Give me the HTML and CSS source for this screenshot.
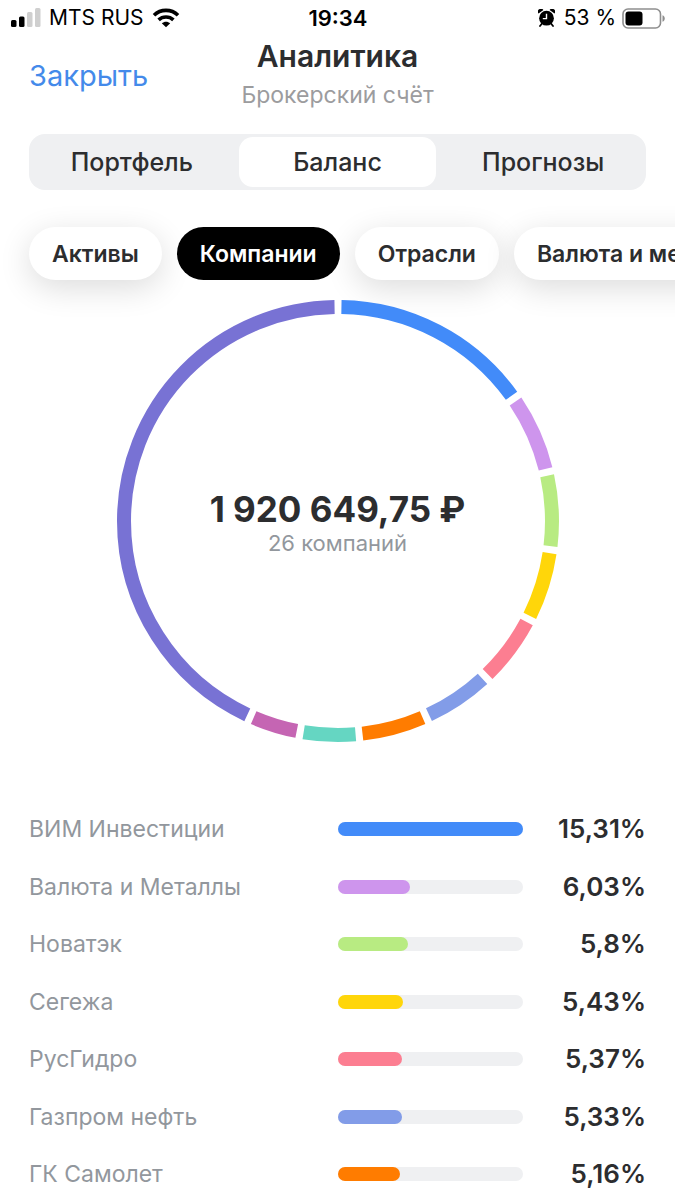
FILE: index.html
```html
<!DOCTYPE html>
<html lang="ru">
<head>
<meta charset="utf-8">
<meta name="viewport" content="width=device-width, initial-scale=1">
<title>Аналитика</title>
<link rel="stylesheet" href="styles.css">
</head>
<body>
<div class="page">
  <div class="status">
    <div class="status-left">
      <svg class="signal" width="30" height="20" viewBox="0 0 30 20" aria-hidden="true">
        <rect x="0" y="12" width="5.500" height="7" rx="1.500"/>
        <rect x="8" y="8.500" width="5.500" height="10.500" rx="1.500"/>
        <rect class="signal-off" x="16" y="4" width="5.500" height="15" rx="1.500"/>
        <rect class="signal-off" x="24" y="0" width="5.500" height="19" rx="1.500"/>
      </svg>
      <span>MTS RUS</span>
      <svg width="28" height="20" viewBox="0 0 28 20" aria-hidden="true">
        <g fill="none" stroke="#000" stroke-width="3.600">
          <path d="M2 7.200C8.600 0.700 19.400 0.700 26 7.200"/>
          <path d="M6.600 11.900C10.700 8 17.300 8 21.400 11.900"/>
        </g>
        <path d="M14 19.300L9.800 15.200C12.200 13.100 15.800 13.100 18.200 15.200Z"/>
      </svg>
    </div>
    <time class="clock">19:34</time>
    <div class="status-right">
      <svg class="alarm" width="17" height="18" viewBox="0 0 17 18" aria-hidden="true">
        <circle cx="8.500" cy="9.200" r="7.400"/>
        <path d="M0.500 4.600A3 3 0 0 1 5.400 0.900ZM16.500 4.600A3 3 0 0 0 11.600 0.900Z"/>
        <path d="M3.800 14.800L2 17M13.200 14.800L15 17" stroke="#000" stroke-width="1.800" stroke-linecap="round"/>
        <path d="M8.500 4.800V9.600H4.800" fill="none" stroke="#fff" stroke-width="1.400"/>
      </svg>
      <span>53 %</span>
      <svg width="43" height="21" viewBox="0 0 43 21" aria-hidden="true">
        <rect x="1" y="1" width="37.500" height="19" rx="5" fill="none" stroke="#8e8e8e" stroke-width="1.600"/>
        <rect x="3.500" y="3.500" width="17" height="14" rx="3"/>
        <path d="M40.500 7.200C43.500 8 43.500 13 40.500 13.800Z" fill="#8e8e8e"/>
      </svg>
    </div>
  </div>

  <header class="header">
    <button class="close" type="button">Закрыть</button>
    <div class="heading">
      <h1 class="title">Аналитика</h1>
      <p class="subtitle">Брокерский счёт</p>
    </div>
  </header>

  <nav class="segments">
    <button class="segment" type="button">Портфель</button>
    <button class="segment segment-active" type="button">Баланс</button>
    <button class="segment" type="button">Прогнозы</button>
  </nav>

  <div class="chips">
    <button class="chip" type="button">Активы</button>
    <button class="chip chip-active" type="button">Компании</button>
    <button class="chip" type="button">Отрасли</button>
    <button class="chip" type="button">Валюта и металлы</button>
  </div>

  <section class="chart">
    <svg class="donut" viewBox="0 0 442 442" aria-hidden="true">
      <g class="arcs" transform="rotate(-90 221 221)">
        <circle class="blue" cx="221" cy="221" r="214" pathLength="100" stroke-dasharray="14.79 85.21" stroke-dashoffset="-0.26"/>
        <circle class="lilac" cx="221" cy="221" r="214" pathLength="100" stroke-dasharray="5.51 94.49" stroke-dashoffset="-15.57"/>
        <circle class="green" cx="221" cy="221" r="214" pathLength="100" stroke-dasharray="5.28 94.72" stroke-dashoffset="-21.6"/>
        <circle class="yellow" cx="221" cy="221" r="214" pathLength="100" stroke-dasharray="4.91 95.09" stroke-dashoffset="-27.4"/>
        <circle class="pink" cx="221" cy="221" r="214" pathLength="100" stroke-dasharray="4.85 95.15" stroke-dashoffset="-32.83"/>
        <circle class="steel" cx="221" cy="221" r="214" pathLength="100" stroke-dasharray="4.81 95.19" stroke-dashoffset="-38.2"/>
        <circle class="orange" cx="221" cy="221" r="214" pathLength="100" stroke-dasharray="4.64 95.36" stroke-dashoffset="-43.53"/>
        <circle class="teal" cx="221" cy="221" r="214" pathLength="100" stroke-dasharray="3.88 96.12" stroke-dashoffset="-48.69"/>
        <circle class="magenta" cx="221" cy="221" r="214" pathLength="100" stroke-dasharray="3.36 96.64" stroke-dashoffset="-53.09"/>
        <circle class="violet" cx="221" cy="221" r="214" pathLength="100" stroke-dasharray="42.77 57.23" stroke-dashoffset="-56.97"/>
      </g>
    </svg>
    <div class="total">
      <strong class="amount">1 920 649,75 ₽</strong>
      <span class="count">26 компаний</span>
    </div>
  </section>

  <ul class="list">
    <li class="row"><span class="name">ВИМ Инвестиции</span><span class="bar"><span class="fill blue" style="width:100%"></span></span><span class="share">15,31%</span></li>
    <li class="row"><span class="name">Валюта и Металлы</span><span class="bar"><span class="fill lilac" style="width:39.4%"></span></span><span class="share">6,03%</span></li>
    <li class="row"><span class="name">Новатэк</span><span class="bar"><span class="fill green" style="width:37.9%"></span></span><span class="share">5,8%</span></li>
    <li class="row"><span class="name">Сегежа</span><span class="bar"><span class="fill yellow" style="width:35.5%"></span></span><span class="share">5,43%</span></li>
    <li class="row"><span class="name">РусГидро</span><span class="bar"><span class="fill pink" style="width:35.1%"></span></span><span class="share">5,37%</span></li>
    <li class="row"><span class="name">Газпром нефть</span><span class="bar"><span class="fill steel" style="width:34.8%"></span></span><span class="share">5,33%</span></li>
    <li class="row"><span class="name">ГК Самолет</span><span class="bar"><span class="fill orange" style="width:33.7%"></span></span><span class="share">5,16%</span></li>
  </ul>
</div>
</body>
</html>
```
FILE: styles.css
```css
* { box-sizing: border-box; }

body {
  margin: 0;
  background: #fff;
  color: #2c2d2f;
  font-family: Inter, "Liberation Sans", sans-serif;
}

button {
  border: 0;
  padding: 0;
  background: none;
  color: inherit;
  font: inherit;
  white-space: nowrap;
  cursor: pointer;
}

.page {
  display: flex;
  flex-direction: column;
  min-height: 100vh;
}

.status {
  display: grid;
  grid-template-columns: 1fr auto 1fr;
  align-items: center;
  height: 36px;
  padding: 0 10px 0 11px;
  color: #000;
  font-size: 21px;
  line-height: 28px;
}

.status-left,
.status-right {
  display: flex;
  align-items: center;
  gap: 8px;
  white-space: nowrap;
}

.status-right {
  justify-content: flex-end;
  gap: 6px;
}

.alarm { margin-right: 3px; }

.signal-off { fill: #cfcfcf; }

.clock {
  font-size: 22px;
  font-weight: 600;
}

.header {
  display: grid;
  grid-template-columns: 1fr auto 1fr;
  align-items: center;
  padding: 2px 29px 0;
}

.close {
  justify-self: start;
  padding-top: 2px;
  color: #448aea;
  font-size: 29px;
  line-height: 36px;
}

.heading { text-align: center; }

.title {
  margin: 0;
  font-size: 30px;
  font-weight: 600;
  line-height: 36px;
}

.subtitle {
  margin: 5px 0 0;
  color: #9c9c9e;
  font-size: 23px;
  line-height: 32px;
}

.segments {
  display: grid;
  grid-template-columns: repeat(3, 1fr);
  gap: 8px;
  margin: 23px 29px 0;
  padding: 3px 4px;
  border-radius: 16px;
  background: #eff0f2;
}

.segment {
  height: 50px;
  border-radius: 14px;
  font-size: 25px;
  font-weight: 500;
}

.segment-active { background: #fff; }

.chips {
  display: flex;
  gap: 15px;
  margin-bottom: -24px;
  padding: 37px 29px 44px;
  overflow-x: auto;
  scrollbar-width: none;
}

.chip {
  flex: none;
  height: 53px;
  padding: 0 23px;
  border-radius: 27px;
  background: #fff;
  box-shadow: 0 8px 32px rgba(0, 0, 0, 0.14);
  font-size: 23px;
  font-weight: 600;
}

.chip-active {
  background: #000;
  box-shadow: none;
  color: #fff;
}

.chart {
  display: grid;
  place-items: center;
  width: 66%;
  max-width: 442px;
  margin: 0 auto;
}

.donut,
.total { grid-area: 1 / 1; }

.donut {
  display: block;
  width: 100%;
}

.arcs {
  fill: none;
  stroke-width: 14;
}

.arcs circle { stroke: currentColor; }

.total {
  display: flex;
  flex-direction: column;
  align-items: center;
  padding-top: 4px;
  white-space: nowrap;
}

.amount {
  font-size: 35px;
  font-weight: 700;
  line-height: 40px;
}

.count {
  color: #92979d;
  font-size: 22px;
  line-height: 28px;
}

.list {
  display: flex;
  flex: 1;
  flex-direction: column;
  justify-content: space-between;
  gap: 16px;
  margin: 0;
  padding: 71px 29px 10px;
  list-style: none;
}

.row {
  display: grid;
  grid-template-columns: 5fr 3fr 2fr;
  align-items: center;
  line-height: 32px;
}

.name {
  color: #92979d;
  font-size: 23px;
}

.bar {
  height: 14px;
  border-radius: 7px;
  background: #eff0f2;
}

.fill {
  display: block;
  height: 100%;
  border-radius: 7px;
  background: currentColor;
}

.share {
  font-size: 26px;
  font-weight: 600;
  text-align: right;
}

.blue { color: #428bf9; }
.lilac { color: #ce95ed; }
.green { color: #b8eb82; }
.yellow { color: #ffd60a; }
.pink { color: #fc7e91; }
.steel { color: #829ce8; }
.orange { color: #ff7c00; }
.teal { color: #65d6c2; }
.magenta { color: #c565b3; }
.violet { color: #7872d4; }
```
